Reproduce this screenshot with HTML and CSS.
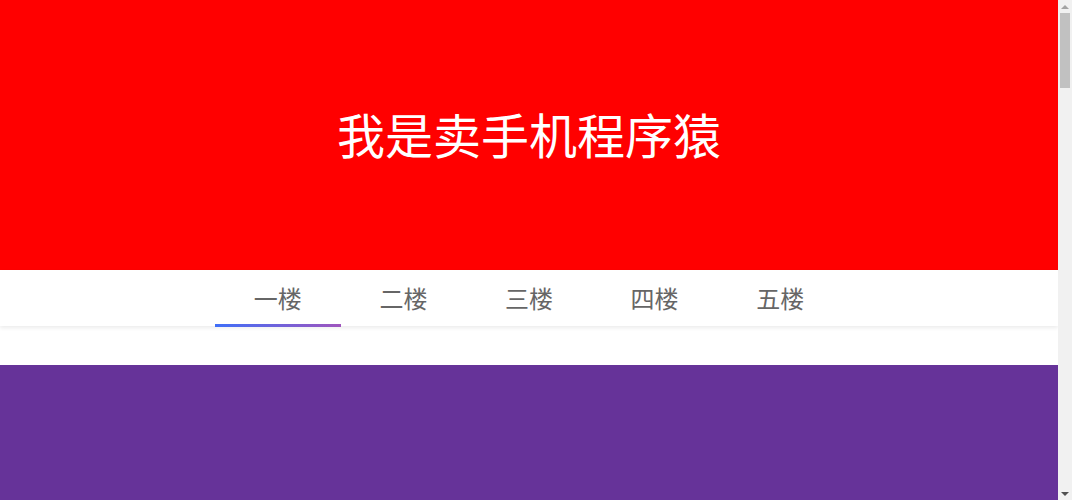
FILE: index.html
```html
<!DOCTYPE html>
<html lang="zh-CN">
<head>
<meta charset="utf-8">
<title>楼层导航</title>
<link rel="stylesheet" href="styles.css">
</head>
<body>
<header class="banner">
  <h1 class="banner-title">我是卖手机程序猿</h1>
</header>
<nav class="floor-nav">
  <ul class="floor-tabs">
    <li class="floor-tab is-active">一楼</li>
    <li class="floor-tab">二楼</li>
    <li class="floor-tab">三楼</li>
    <li class="floor-tab">四楼</li>
    <li class="floor-tab">五楼</li>
  </ul>
</nav>
<main class="floors">
  <section class="floor floor-1"></section>
  <section class="floor floor-2"></section>
  <section class="floor floor-3"></section>
  <section class="floor floor-4"></section>
  <section class="floor floor-5"></section>
</main>
<div class="scrollbar" aria-hidden="true">
  <div class="sb-btn"><span class="sb-arrow sb-up"></span></div>
  <div class="sb-track"><div class="sb-thumb"></div></div>
  <div class="sb-btn"><span class="sb-arrow sb-down"></span></div>
</div>
</body>
</html>
```

FILE: styles.css
```css
* {
  box-sizing: border-box;
}

html, body {
  margin: 0;
  padding: 0;
}

html {
  scrollbar-width: none;
}

::-webkit-scrollbar {
  display: none;
}

body {
  font-family: "Noto Sans CJK SC", "Noto Sans", sans-serif;
  background: #fff;
  margin-right: 14px;
}

.banner {
  height: 270px;
  background: #ff0000;
  display: flex;
  align-items: center;
  justify-content: center;
}

.banner-title {
  margin: 0;
  color: #fff;
  font-size: 48px;
  font-weight: 400;
  line-height: 1;
  padding-bottom: 4px;
}

.floor-nav {
  height: 56px;
  background: #fff;
  box-shadow: 0 2px 4px rgba(0, 0, 0, 0.08);
  position: relative;
  z-index: 1;
}

.floor-tabs {
  list-style: none;
  margin: 0 auto;
  padding: 0;
  height: 100%;
  display: flex;
  justify-content: center;
}

.floor-tab {
  width: 125.6px;
  display: flex;
  align-items: center;
  justify-content: center;
  font-size: 24px;
  color: #666;
  position: relative;
  padding-bottom: 2px;
}

.floor-tab.is-active::after {
  content: "";
  position: absolute;
  left: 0;
  right: 0;
  bottom: -1px;
  height: 3px;
  background: linear-gradient(to right, #3f6ff8, #9f55bd);
}

.floors {
  padding-top: 39px;
  display: flex;
  flex-direction: column;
  gap: 40px;
}

.floor {
  height: 500px;
}

.floor-1 { background: #663399; }
.floor-2 { background: #ff9900; }
.floor-3 { background: #33aa55; }
.floor-4 { background: #3366cc; }
.floor-5 { background: #cc3366; }

/* static scrollbar overlay */
.scrollbar {
  position: fixed;
  top: 0;
  right: 0;
  width: 14px;
  height: 100vh;
  background: #f1f1f1;
  display: flex;
  flex-direction: column;
  z-index: 10;
}

.sb-btn {
  height: 13px;
  display: flex;
  align-items: center;
  justify-content: center;
}

.sb-arrow {
  width: 0;
  height: 0;
  border-left: 4px solid transparent;
  border-right: 4px solid transparent;
}

.sb-up {
  border-bottom: 4px solid #a3a3a3;
}

.sb-down {
  border-top: 4px solid #505050;
}

.sb-track {
  flex: 1;
  padding: 0 2px;
}

.sb-thumb {
  height: 75px;
  background: #c1c1c1;
}
```
